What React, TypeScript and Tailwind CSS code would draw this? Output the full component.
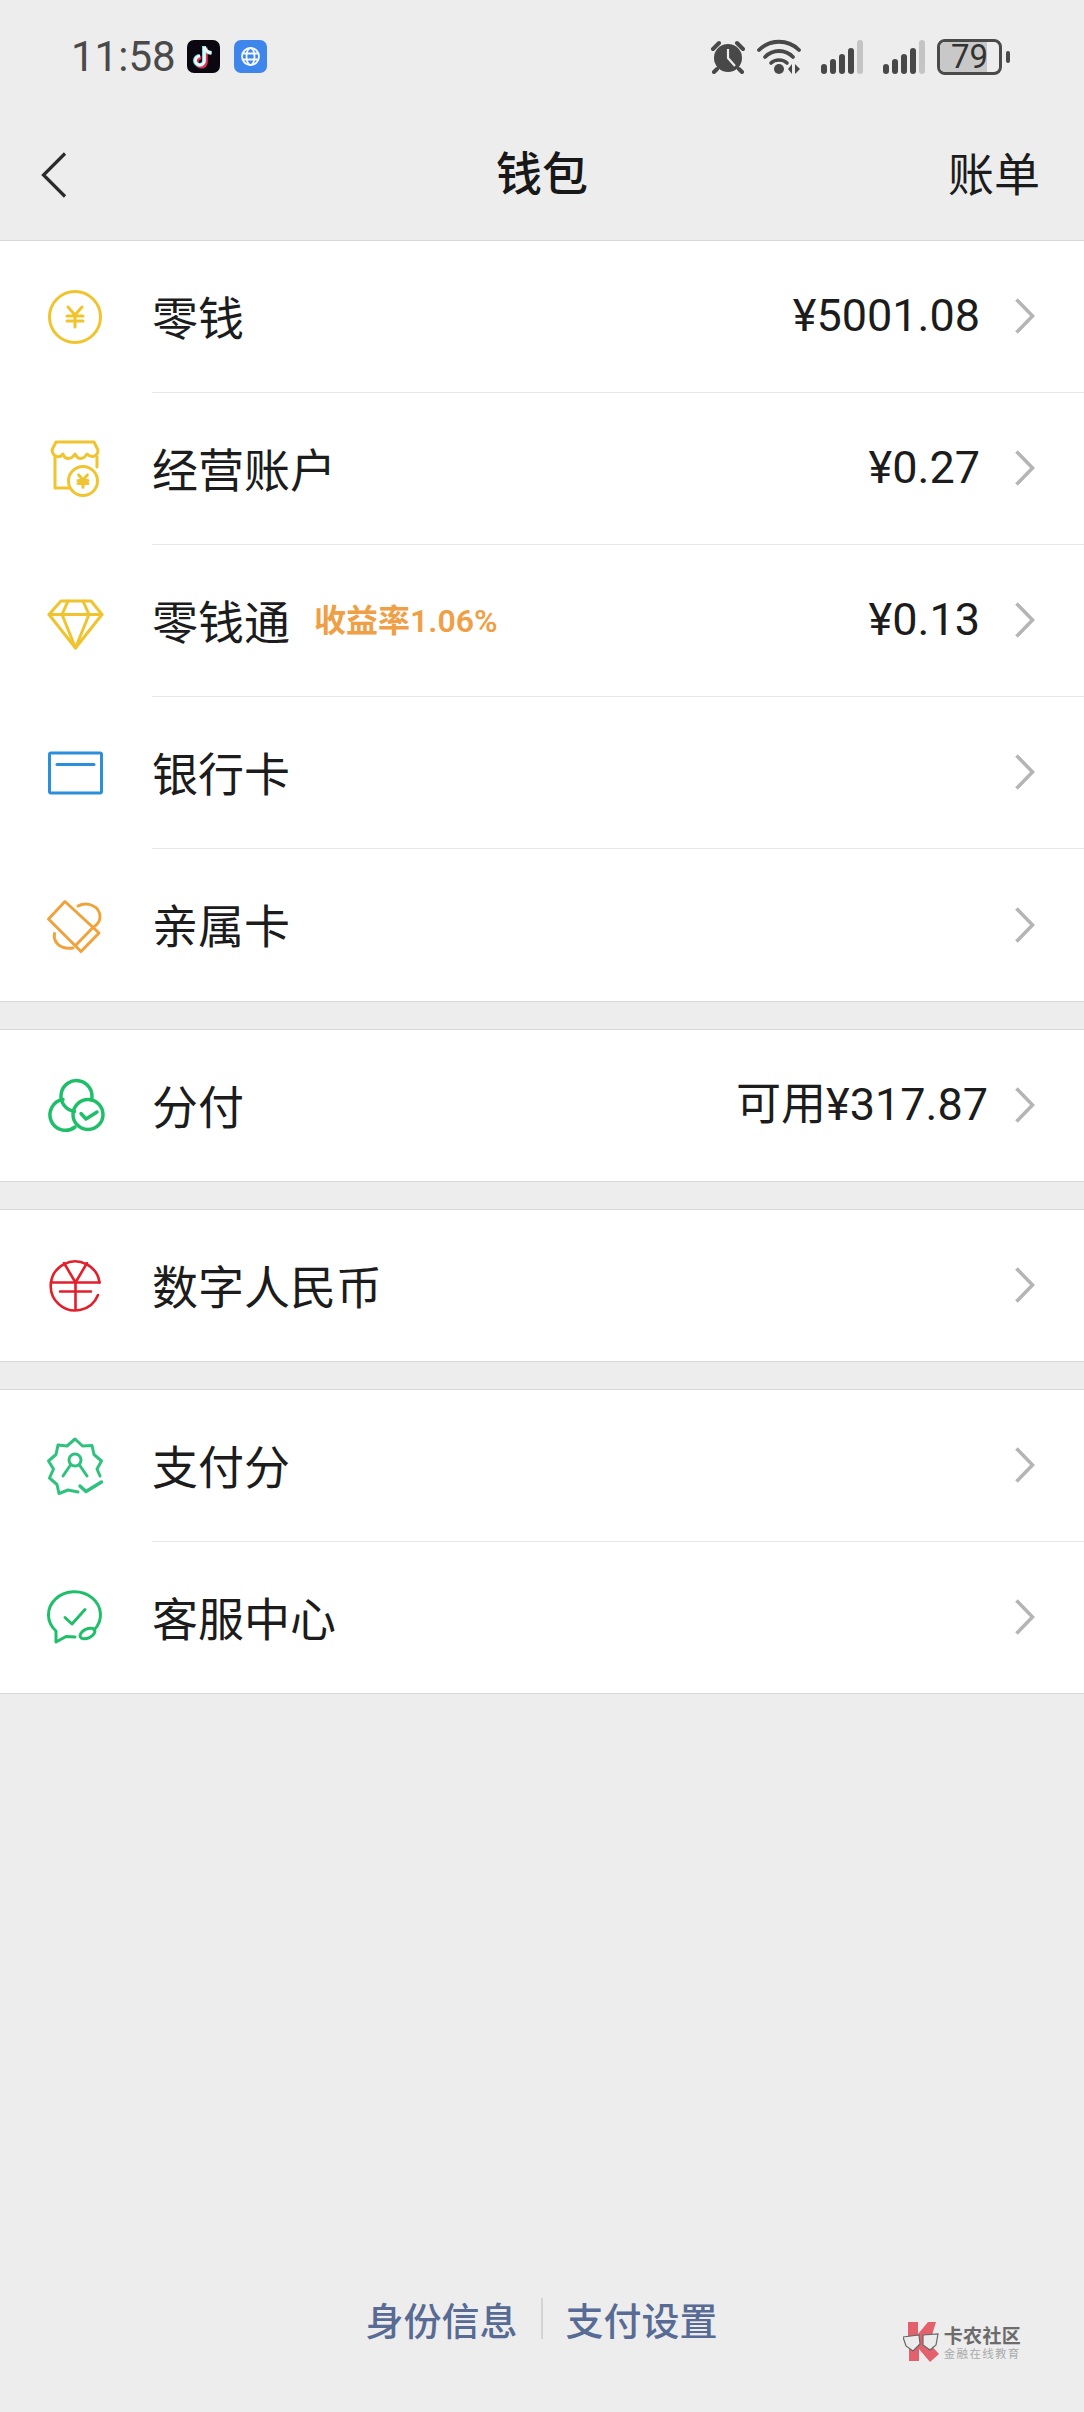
import type { ReactNode } from 'react';

const Y = '#efc42f';
const G = '#1fbf6a';

function Box({ children, color }: { children: ReactNode; color: string }) {
  return (
    <svg width="60" height="60" viewBox="0 0 60 60" fill="none" stroke={color} strokeWidth="3" strokeLinecap="round" strokeLinejoin="round" className="shrink-0">
      {children}
    </svg>
  );
}

function YenMark({ x, y, s }: { x: number; y: number; s: number }) {
  return (
    <path
      d={`M${x - 7 * s} ${y - 9 * s}L${x} ${y - 1 * s}L${x + 7 * s} ${y - 9 * s}M${x - 8 * s} ${y}H${x + 8 * s}M${x - 8 * s} ${y + 5 * s}H${x + 8 * s}M${x} ${y - 1 * s}V${y + 11 * s}`}
    />
  );
}

const CoinIcon = () => (
  <Box color={Y}>
    <circle cx="30" cy="30" r="25.5" />
    <YenMark x={30} y={29} s={1} />
  </Box>
);

const ShopIcon = () => (
  <Box color={Y}>
    <path d="M11 3H49L53 11C53 17 47 20 42 15C38 21 33 21 30 15C26 21 20 21 18 15C14 20 8 18 7 11Z" />
    <path d="M10 18V49H24M52 18V28" />
    <circle cx="38" cy="42" r="14.5" fill="#fff" />
    <YenMark x={38} y={41.5} s={0.62} />
  </Box>
);

const DiamondIcon = () => (
  <Box color={Y}>
    <path d="M16 10H46L57 23.5L30.5 57L4 23.5Z" />
    <path d="M4 23.5H57M23 10L17 23.5L30.5 57L44 23.5L38 10" />
  </Box>
);

const CardIcon = () => (
  <Box color="#2b8fdc">
    <rect x="4.5" y="10" width="52" height="40" rx="1.5" />
    <path d="M12 21.5H49" />
  </Box>
);

const FamilyIcon = () => (
  <Box color="#f0a33c">
    <path d="M20 6.5L3.5 24L36 56.5L54 38Z" />
    <path d="M48 32.5L30.5 50.5" />
    <path d="M33 11C42 6 55 11 55 22C55 26 52 30 48 32.5" />
    <path d="M9.5 38.5C8 47 15 55 28 53" />
  </Box>
);

const SplitIcon = () => (
  <Box color={G}>
    <path d="M46.5 25A15.5 15.5 0 1 0 29.5 36.5" strokeWidth="3.5" />
    <path d="M18 24.5A15.5 15.5 0 1 0 30 52" strokeWidth="3.5" />
    <circle cx="43" cy="39.5" r="15" strokeWidth="3.5" />
    <path d="M36 38.5L41 44L52 37" strokeWidth="3.5" />
  </Box>
);

const RmbIcon = () => (
  <Box color="#e2202c">
    <path d="M54.5 27.5A24.5 24.5 0 1 0 53 40" strokeWidth="2.6" />
    <path d="M6 27.5H54.5M15 36.5H46" strokeWidth="2.6" />
    <path d="M19 8L30.5 27.5L42 8M30.5 27.5V54" strokeWidth="2.6" />
  </Box>
);

const ScoreIcon = () => (
  <Box color="#2ec27e">
    <path d="M33 56L23 54L14 57.5L12 48.5L4.5 42L8.5 33L3.5 25L11 18.5L13 9L22 10L30 3L37.5 10L47 9.5L49 18.5L56.5 25L52 33L55 40" />
    <circle cx="30" cy="24" r="6" />
    <path d="M18 40L25.5 29M42 40L34.5 29" />
    <path d="M35 50L41 55.5L56.5 46" strokeWidth="3.5" />
  </Box>
);

const ServiceIcon = () => (
  <Box color={G}>
    <ellipse cx="42.5" cy="46.5" rx="8" ry="4.5" transform="rotate(-25 42.5 46.5)" />
    <path d="M49 43A26 23 0 1 0 11 44L11 55L21 49.5L30 50" />
    <path d="M20 30.5L27 37L40 22.5" />
  </Box>
);

function Chevron() {
  return (
    <svg width="22" height="38" viewBox="0 0 22 38" fill="none" stroke="#b5b5b5" strokeWidth="3.6" className="shrink-0">
      <path d="M2.5 2.5L18.5 19L2.5 35.5" />
    </svg>
  );
}

type RowData = { icon: ReactNode; label: string; tag?: string; value?: string; gap?: string };

function Row({ row, divider, short }: { row: RowData; divider: boolean; short: boolean }) {
  return (
    <div className={`flex pl-[45px] items-stretch ${short ? 'h-[151px]' : 'h-[152px]'}`}>
      <div className="w-[60px] mr-[47px] shrink-0 flex items-center pb-px">{row.icon}</div>
      <div className={`flex-1 flex items-center pb-px pr-[48px] ${divider ? 'border-b border-[#e6e6e6]' : ''}`}>
        <span className="text-[46px] leading-none text-[#1c1c1c] mb-[3px]">{row.label}</span>
        {row.tag && (
          <span className="ml-[24px] mt-[1px] text-[32px] leading-none font-semibold text-[#ef9f45] font-['Roboto','Noto_Sans_CJK_SC',sans-serif]">{row.tag}</span>
        )}
        <span className={`ml-auto mb-[2px] text-[45px] leading-none text-[#1c1c1c] font-['Roboto','Noto_Sans_CJK_SC',sans-serif] ${row.gap ?? 'mr-[34px]'}`}>{row.value}</span>
        <Chevron />
      </div>
    </div>
  );
}

function Section({ rows, first }: { rows: RowData[]; first?: boolean }) {
  return (
    <section className={`bg-white border-b border-[#d8d8d8] ${first ? '' : 'border-t mt-[27px]'}`}>
      {rows.map((row, i) => (
        <Row key={row.label} row={row} divider={i < rows.length - 1} short={!first && i === rows.length - 1} />
      ))}
    </section>
  );
}

function Bars() {
  return (
    <svg width="42" height="34" viewBox="0 0 42 34">
      <rect x="0" y="24" width="6" height="10" rx="3" fill="#484848" />
      <rect x="9" y="19" width="6" height="15" rx="3" fill="#484848" />
      <rect x="18" y="14" width="6" height="20" rx="3" fill="#484848" />
      <rect x="27" y="8" width="6" height="26" rx="3" fill="#484848" />
      <rect x="36" y="0" width="6" height="34" rx="3" fill="#c4c4c4" />
    </svg>
  );
}

function StatusBar() {
  return (
    <div className="h-[114px] pl-[71px] flex items-center pb-[1px] relative">
      <span className="text-[42px] leading-none text-[#4a4a4a] w-[116px] font-['Roboto',sans-serif]">11:58</span>
      <svg width="33" height="33" viewBox="0 0 33 33">
        <rect width="33" height="33" rx="7" fill="#0a0710" />
        <path d="M18 7V21.5A4.5 4.5 0 1 1 13.5 17" fill="none" stroke="#ee2a55" strokeWidth="4" transform="translate(0.8 0.6)" />
        <path d="M17 6V20.5A4.5 4.5 0 1 1 12.5 16M17 7C18 10.5 20.5 12.5 24.5 13" fill="none" stroke="#63e5e5" strokeWidth="4" />
        <path d="M17.4 6.5V20.5A4.5 4.5 0 1 1 13 16M17.4 7C18.5 10.5 21 12.5 24.5 13" fill="none" stroke="#f5f5f5" strokeWidth="2.6" />
      </svg>
      <svg width="33" height="33" viewBox="0 0 33 33" className="ml-[14px]">
        <rect width="33" height="33" rx="7" fill="#3f86ec" />
        <g fill="none" stroke="#f4f8ff" strokeWidth="1.8">
          <circle cx="16.5" cy="16.5" r="8.5" />
          <ellipse cx="16.5" cy="16.5" rx="4" ry="8.5" />
          <path d="M8.5 13.5H24.5M8.5 19.5H24.5" />
        </g>
      </svg>
      <div className="ml-auto mr-[74px] flex items-center">
        <svg width="36" height="34" viewBox="0 0 36 34">
          <circle cx="18" cy="18" r="14" fill="#484848" />
          <path d="M18 9V18L25 26" fill="none" stroke="#ededed" strokeWidth="2.2" />
          <path d="M3 9L9 3M33 9L27 3M7 29L4 32M29 29L32 32" stroke="#484848" strokeWidth="4" strokeLinecap="round" />
        </svg>
        <svg width="46" height="36" viewBox="0 0 46 36" className="ml-[11px]" fill="none" stroke="#484848" strokeLinecap="round">
          <path d="M2 11C13 0 31 0 42 11" strokeWidth="3.8" />
          <path d="M8 18C16 10 28 10 36 18" strokeWidth="3.8" />
          <path d="M14 24C18 20 26 20 30 24" strokeWidth="3.6" />
          <circle cx="22" cy="30" r="5" fill="#484848" stroke="none" />
          <path d="M35 25L31 30L35 35ZM38 25L43 30L38 35Z" fill="#484848" stroke="none" />
        </svg>
        <div className="ml-[18px]"><Bars /></div>
        <div className="ml-[20px]"><Bars /></div>
        <div className="ml-[12px] w-[65px] h-[36px] rounded-[8px] border-[3px] border-[#4a4a4a] relative flex items-center justify-center">
          <div className="absolute left-0 top-0 bottom-0 w-[47px] rounded-l-[5px] bg-[#c8c8c8]" />
          <span className="relative text-[33px] leading-[30px] text-[#333] font-['Roboto',sans-serif]">79</span>
        </div>
        <div className="ml-[4px] w-[4px] h-[12px] rounded-[2px] bg-[#4a4a4a]" />
      </div>
    </div>
  );
}

function NavBar() {
  return (
    <div className="h-[127px] flex items-center justify-between pl-[41px] pr-[44px] relative border-b border-[#d8d8d8]">
      <svg width="26" height="46" viewBox="0 0 26 46" fill="none" stroke="#2b2b2b" strokeWidth="3.2" className="mt-[-5px]">
        <path d="M24 1.5L2.5 23L24 44.5" />
      </svg>
      <span className="absolute left-0 right-0 top-[33px] text-center text-[46px] leading-none font-medium text-[#181818] pointer-events-none">钱包</span>
      <span className="text-[46px] leading-none text-[#1c1c1c] mb-[13px]">账单</span>
    </div>
  );
}

function Watermark() {
  return (
    <div className="absolute right-[63px] bottom-[50px] flex items-center">
      <svg width="37" height="40" viewBox="0 0 37 40">
        <path d="M5 0H15V12L25 0H33L29 13L24 19L36 32L27 40L16 27V39H6V22L5 14Z" fill="#e2616d" />
        <path d="M0 15L16 13L17 22L10 29L3 24ZM20 13L35 12L33 23L27 28L20 23Z" fill="#ececec" stroke="#666" strokeWidth="1.2" />
      </svg>
      <div className="ml-[4px]">
        <div className="text-[19px] leading-[22px] font-bold text-[#6b6b6b] tracking-[0.3px]">卡农社区</div>
        <div className="text-[11.5px] leading-[14px] text-[#aaa] tracking-[1.3px]">金融在线教育</div>
      </div>
    </div>
  );
}

export default function App() {
  return (
    <div className="min-h-[2412px] bg-[#ededed] flex flex-col relative font-['Noto_Sans_CJK_SC','Noto_Sans',sans-serif]">
      <StatusBar />
      <NavBar />
      <Section
        first
        rows={[
          { icon: <CoinIcon />, label: '零钱', value: '¥5001.08' },
          { icon: <ShopIcon />, label: '经营账户', value: '¥0.27' },
          { icon: <DiamondIcon />, label: '零钱通', tag: '收益率1.06%', value: '¥0.13' },
          { icon: <CardIcon />, label: '银行卡' },
          { icon: <FamilyIcon />, label: '亲属卡' },
        ]}
      />
      <Section rows={[{ icon: <SplitIcon />, label: '分付', value: '可用¥317.87', gap: 'mr-[26px]' }]} />
      <Section rows={[{ icon: <RmbIcon />, label: '数字人民币' }]} />
      <Section
        rows={[
          { icon: <ScoreIcon />, label: '支付分' },
          { icon: <ServiceIcon />, label: '客服中心' },
        ]}
      />
      <div className="mt-auto mb-[73px] flex justify-center items-center pr-[1px]">
        <span className="text-[38px] leading-none font-medium text-[#576b95]">身份信息</span>
        <span className="w-[2px] h-[41px] bg-[#d4d4d4] mx-[23px]" />
        <span className="text-[38px] leading-none font-medium text-[#576b95]">支付设置</span>
      </div>
      <Watermark />
    </div>
  );
}
